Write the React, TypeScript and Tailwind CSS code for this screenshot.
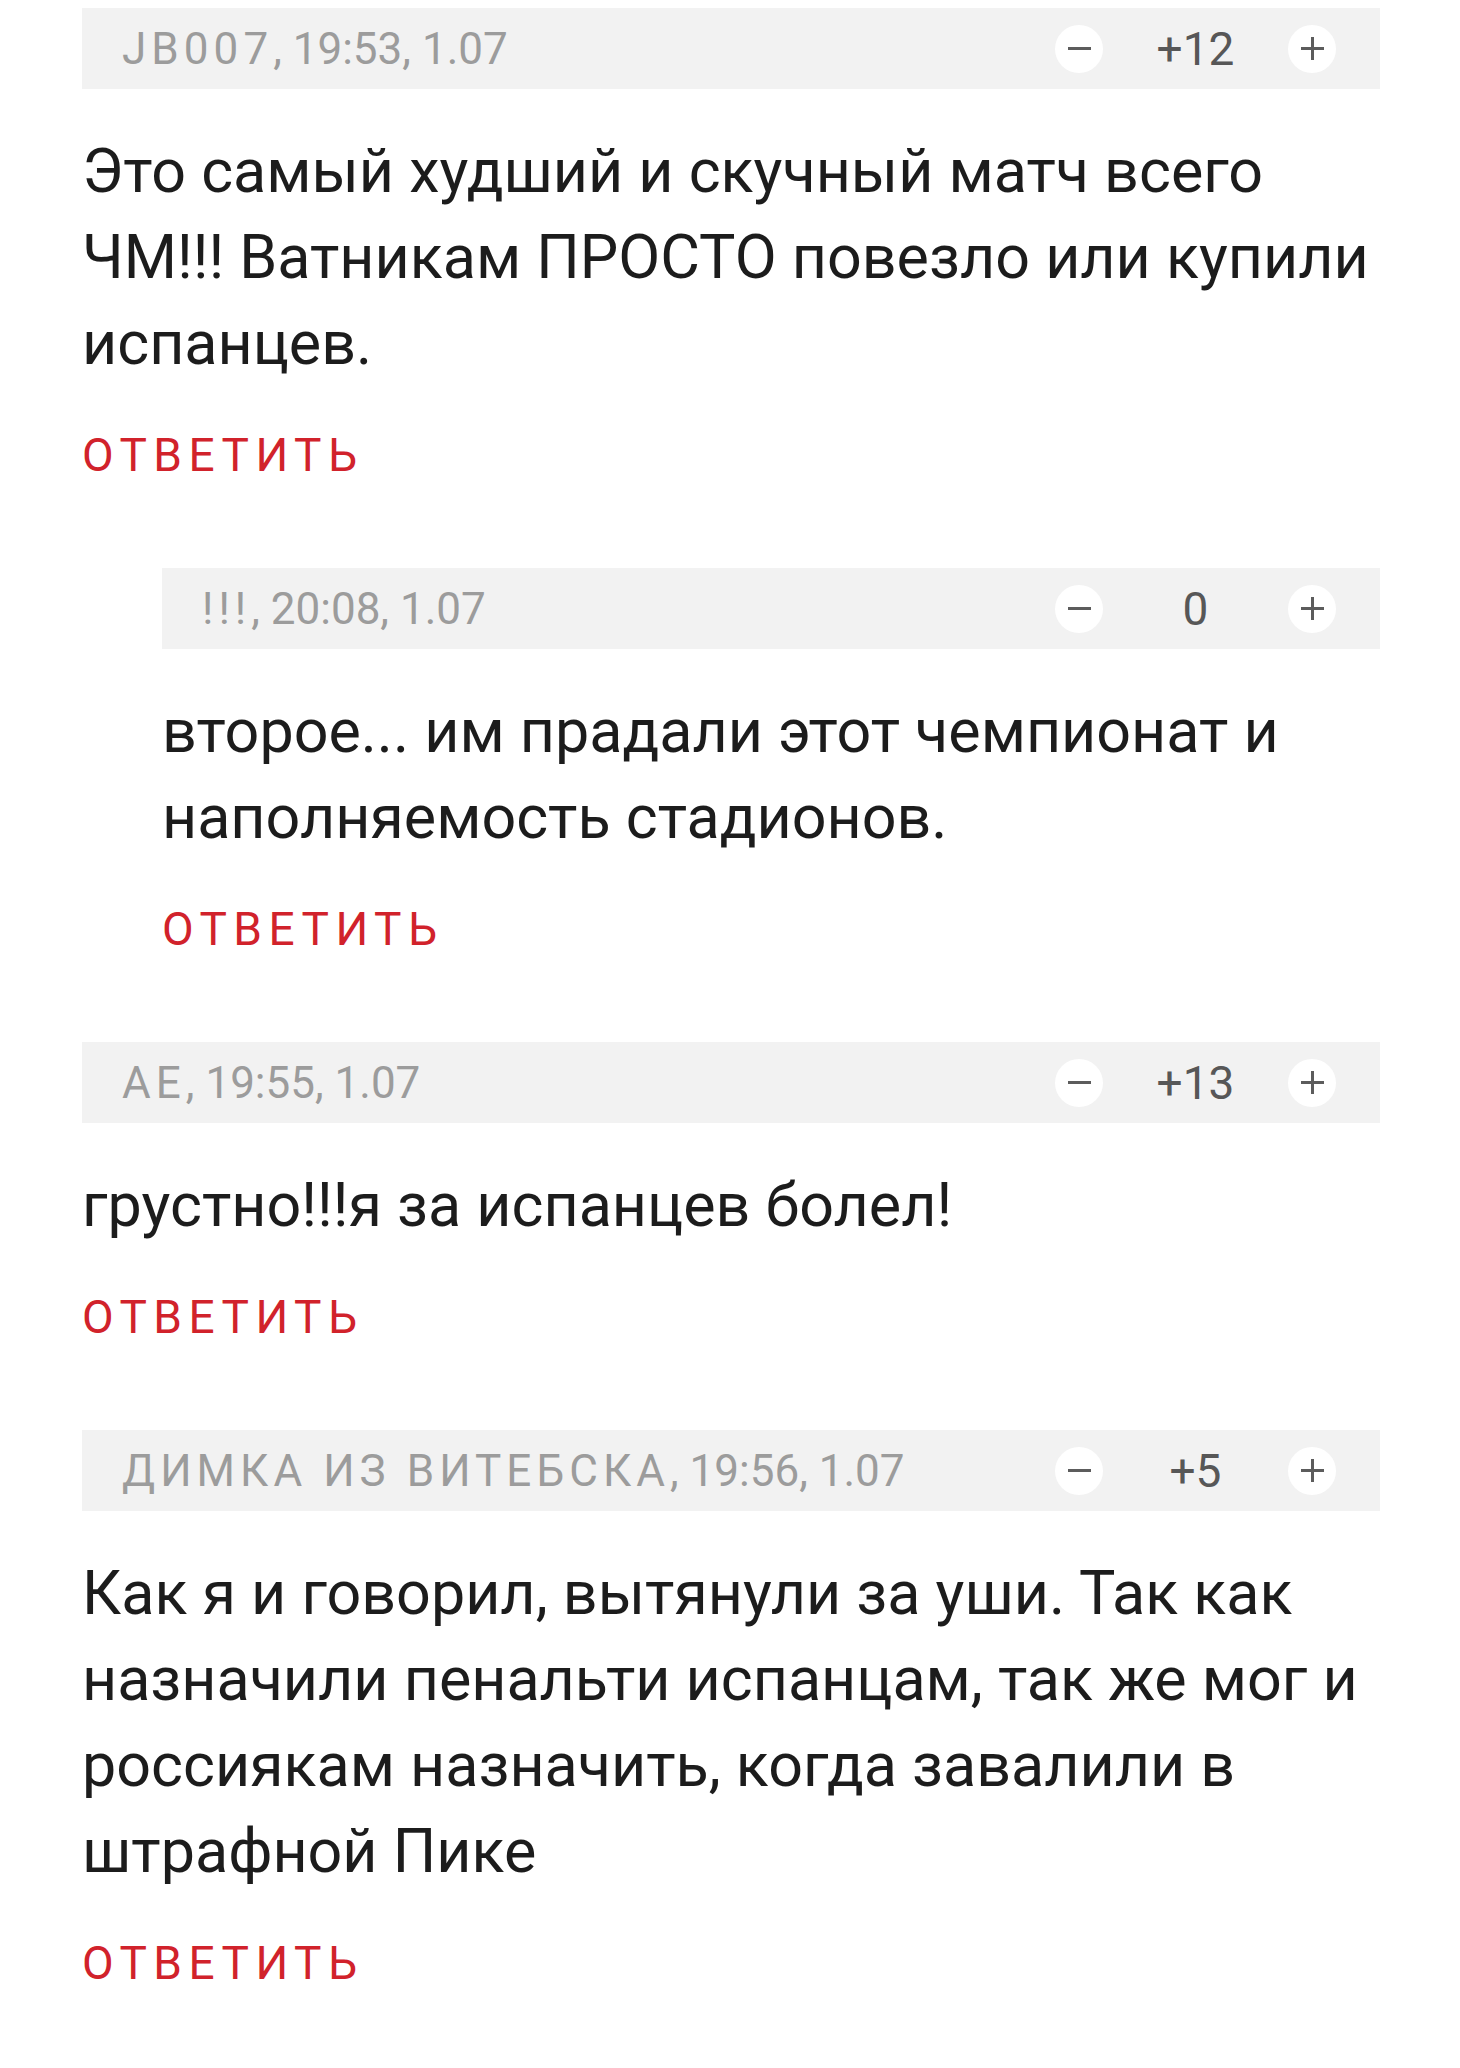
import React from "react";

type C = {
  user: string;
  rest: string;
  score: string;
  text: string;
  nested?: boolean;
};

const comments: C[] = [
  {
    user: "JB007",
    rest: ", 19:53, 1.07",
    score: "+12",
    text: "Это самый худший и скучный матч всего ЧМ!!! Ватникам ПРОСТО повезло или купили испанцев.",
  },
  {
    user: "!!!",
    rest: ", 20:08, 1.07",
    score: "0",
    text: "второе... им прадали этот чемпионат и наполняемость стадионов.",
    nested: true,
  },
  {
    user: "AE",
    rest: ", 19:55, 1.07",
    score: "+13",
    text: "грустно!!!я за испанцев болел!",
  },
  {
    user: "ДИМКА ИЗ ВИТЕБСКА",
    rest: ", 19:56, 1.07",
    score: "+5",
    text: "Как я и говорил, вытянули за уши. Так как назначили пенальти испанцам, так же мог и россиякам назначить, когда завалили в штрафной Пике",
  },
];

function Minus() {
  return (
    <div className="w-[48px] h-[48px] rounded-full bg-white flex items-center justify-center shrink-0">
      <div className="w-[23px] h-[3px] bg-[#5c5c5c]" />
    </div>
  );
}

function Plus() {
  return (
    <div className="relative w-[48px] h-[48px] rounded-full bg-white flex items-center justify-center shrink-0">
      <div className="w-[23px] h-[3px] bg-[#5c5c5c]" />
      <div className="absolute w-[3px] h-[23px] bg-[#5c5c5c]" />
    </div>
  );
}

function Comment({ c, first }: { c: C; first: boolean }) {
  return (
    <div className={(c.nested ? "ml-[80px] " : "") + (first ? "" : "mt-[88px]")}>
      <div className="h-[81px] bg-[#f2f2f2] flex items-center pl-[40px] pr-[44px]">
        <div className="flex-1 text-[44px] text-[#9c9c9c] whitespace-nowrap leading-none">
          <span className="tracking-[0.115em]">{c.user}</span>
          <span>{c.rest}</span>
        </div>
        <Minus />
        <div className="w-[185px] text-center text-[46px] text-[#575757] leading-none">{c.score}</div>
        <Plus />
      </div>
      <div className="mt-[39px] text-[61px] leading-[86px] text-[#1c1c1c]">{c.text}</div>
      <div className="mt-[44px] h-[50px] leading-[50px] text-[46px] tracking-[0.14em] text-[#d1222b]">
        ОТВЕТИТЬ
      </div>
    </div>
  );
}

export default function App() {
  return (
    <div className="w-[1460px] min-h-[2068px] bg-white pt-[8px] pl-[82px] pr-[80px] font-['Roboto',sans-serif]">
      {comments.map((c, i) => (
        <Comment key={i} c={c} first={i === 0} />
      ))}
    </div>
  );
}
